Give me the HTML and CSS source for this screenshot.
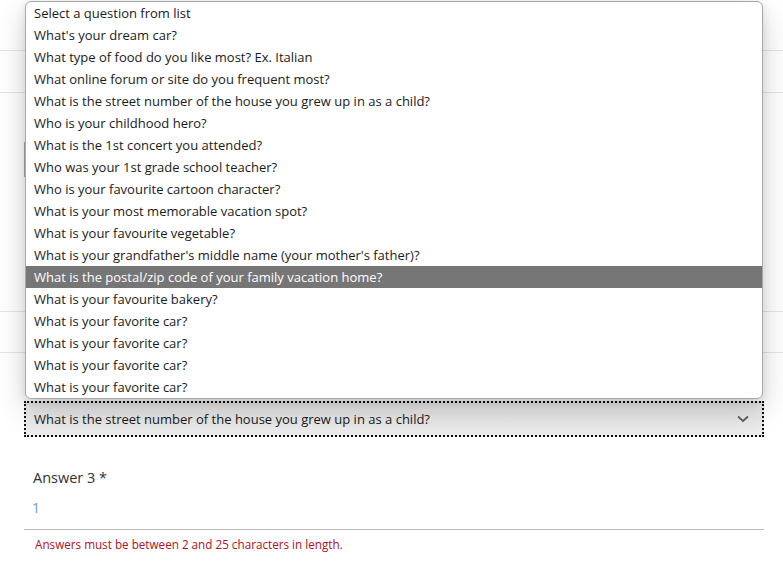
FILE: index.html
```html
<!DOCTYPE html>
<html lang="en">
<head>
<meta charset="utf-8">
<title>Security questions</title>
<link rel="stylesheet" href="styles.css">
</head>
<body>
<div class="page">
  <div class="rule rule-1"></div>
  <div class="rule rule-2"></div>
  <div class="field-box"></div>
  <div class="rule rule-3"></div>
  <div class="rule rule-4"></div>
  <div class="select">
    <span class="select-text">What is the street number of the house you grew up in as a child?</span>
    <svg class="chevron" width="12" height="8" viewBox="0 0 12 8"><polyline points="1,1.5 6,6 11,1.5" fill="none" stroke="#5f5f5f" stroke-width="1.8"/></svg>
  </div>
  <div class="label">Answer 3 *</div>
  <div class="input">1</div>
  <div class="error">Answers must be between 2 and 25 characters in length.</div>

  <ul class="listbox">
    <li>Select a question from list</li>
    <li>What's your dream car?</li>
    <li>What type of food do you like most? Ex. Italian</li>
    <li>What online forum or site do you frequent most?</li>
    <li>What is the street number of the house you grew up in as a child?</li>
    <li>Who is your childhood hero?</li>
    <li>What is the 1st concert you attended?</li>
    <li>Who was your 1st grade school teacher?</li>
    <li>Who is your favourite cartoon character?</li>
    <li>What is your most memorable vacation spot?</li>
    <li>What is your favourite vegetable?</li>
    <li>What is your grandfather's middle name (your mother's father)?</li>
    <li class="active">What is the postal/zip code of your family vacation home?</li>
    <li>What is your favourite bakery?</li>
    <li>What is your favorite car?</li>
    <li>What is your favorite car?</li>
    <li>What is your favorite car?</li>
    <li>What is your favorite car?</li>
  </ul>
</div>
</body>
</html>
```

FILE: styles.css
```css
html, body {
  margin: 0;
  padding: 0;
  background: #ffffff;
}

body {
  font-family: "Open Sans", "Noto Sans", sans-serif;
  font-size: 13px;
  color: #1a1a1a;
}

.page {
  position: relative;
  width: 783px;
  height: 567px;
  overflow: hidden;
}

.rule {
  height: 1px;
  background: #e2e1ee;
}

.rule-1 { margin-top: 50px; }
.rule-2 { margin-top: 41px; }
.rule-3 { margin-top: 134px; }
.rule-4 { margin-top: 40px; }

.field-box {
  box-sizing: border-box;
  margin: 49px 20px 0 24px;
  height: 35px;
  border: 1px solid #a9a9a9;
  border-left-width: 2px;
  border-right-width: 2px;
}

.select {
  box-sizing: border-box;
  margin: 48px 19px 0 24px;
  height: 36px;
  padding: 0 15px 0 10px;
  display: flex;
  align-items: center;
  justify-content: space-between;
  outline: 2px dotted #111;
  outline-offset: -2px;
  background: linear-gradient(#e6e6e6, #eeeeee);
}

.select-text {
  color: #1a1a1a;
}

.chevron {
  display: block;
}

.label {
  margin: 31px 0 0 33px;
  line-height: 20px;
  font-size: 14.5px;
  color: #323130;
}

.input {
  margin: 0 19px 0 24px;
  padding: 10px 0 11px 8px;
  line-height: 20px;
  font-size: 14px;
  color: #6a9bcf;
  border-bottom: 1px solid #bdbdbd;
}

.error {
  margin: 6px 0 0 35px;
  line-height: 16px;
  font-size: 11.7px;
  color: #b0101c;
}

.listbox {
  position: absolute;
  left: 25px;
  top: 1px;
  width: 738px;
  box-sizing: border-box;
  margin: 0;
  padding: 0;
  list-style: none;
  background: #ffffff;
  border: 1px solid #a8a8a8;
  border-radius: 6px;
  overflow: hidden;
  box-shadow: 0 12px 30px rgba(0, 0, 0, 0.18), 0 2px 10px rgba(0, 0, 0, 0.1);
}

.listbox li {
  height: 22px;
  line-height: 22px;
  padding-left: 8px;
  white-space: nowrap;
  color: #1a1a1a;
}

.listbox li.active {
  background: #767676;
  color: #ffffff;
}
```
